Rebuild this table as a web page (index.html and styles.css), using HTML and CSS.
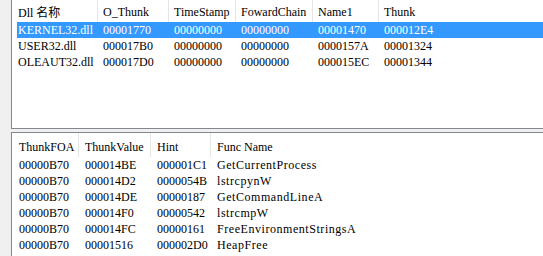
FILE: index.html
```html
<!DOCTYPE html>
<html>
<head>
<meta charset="utf-8">
<link rel="stylesheet" href="styles.css">
</head>
<body>
<div class="frame">
  <section class="panel top">
    <div class="hdr cols-top">
      <div class="hc first">Dll <span class="cjk">名称</span></div>
      <div class="hc">O_Thunk</div>
      <div class="hc">TimeStamp</div>
      <div class="hc">FowardChain</div>
      <div class="hc">Name1</div>
      <div class="hc">Thunk</div>
    </div>
    <div class="row rows-top sel">
      <div>KERNEL32.dll</div><div>00001770</div><div>00000000</div><div>00000000</div><div>00001470</div><div>000012E4</div>
    </div>
    <div class="row rows-top">
      <div>USER32.dll</div><div>000017B0</div><div>00000000</div><div>00000000</div><div>0000157A</div><div>00001324</div>
    </div>
    <div class="row rows-top">
      <div>OLEAUT32.dll</div><div>000017D0</div><div>00000000</div><div>00000000</div><div>000015EC</div><div>00001344</div>
    </div>
  </section>
  <section class="panel bottom">
    <div class="hdr cols-bot">
      <div class="hc first">ThunkFOA</div>
      <div class="hc">ThunkValue</div>
      <div class="hc">Hint</div>
      <div class="hc">Func Name</div>
    </div>
    <div class="row rows-bot"><div>00000B70</div><div>000014BE</div><div>000001C1</div><div class="fn">GetCurrentProcess</div></div>
    <div class="row rows-bot"><div>00000B70</div><div>000014D2</div><div>0000054B</div><div class="fn">lstrcpynW</div></div>
    <div class="row rows-bot"><div>00000B70</div><div>000014DE</div><div>00000187</div><div class="fn">GetCommandLineA</div></div>
    <div class="row rows-bot"><div>00000B70</div><div>000014F0</div><div>00000542</div><div class="fn">lstrcmpW</div></div>
    <div class="row rows-bot"><div>00000B70</div><div>000014FC</div><div>00000161</div><div class="fn">FreeEnvironmentStringsA</div></div>
    <div class="row rows-bot"><div>00000B70</div><div>00001516</div><div>000002D0</div><div class="fn">HeapFree</div></div>
  </section>
</div>
</body>
</html>
```
FILE: styles.css
```css
html, body {
  margin: 0;
  padding: 0;
  background: #f0f0f0;
  overflow: hidden;
  width: 543px;
  height: 256px;
}
body {
  font-family: "Liberation Serif", "Times New Roman", serif;
  font-size: 12px;
  color: #000;
}
.cjk {
  font-family: "Noto Sans CJK SC", sans-serif;
  font-size: 12px;
}
.frame {
  box-sizing: border-box;
  height: 256px;
  width: 543px;
  padding-left: 11px;
  display: flex;
  flex-direction: column;
  gap: 3px;
  overflow: hidden;
}
.panel {
  background: #fff;
  border-left: 1px solid #828790;
  overflow: hidden;
}
.top {
  flex: 0 0 128px;
  border-bottom: 1px solid #828790;
}
.bottom {
  flex: 1 1 auto;
  border-top: 1px solid #828790;
}
.hdr {
  display: grid;
}
.top .hdr { height: 22px; }
.bottom .hdr { height: 24px; }
.hc {
  border-left: 1px solid #e5e5e5;
  line-height: 16px;
  white-space: nowrap;
}
.hc.first { border-left: none; }
.top .hc { padding-top: 4px; padding-left: 5px; }
.top .hc.first { padding-left: 6px; }
.bottom .hc { padding-top: 6px; padding-left: 6px; }
.bottom .hc.first { padding-left: 7px; }
.cols-top { grid-template-columns: 85px 71px 67px 77px 66px 1fr; }
.row {
  display: grid;
  height: 16px;
  line-height: 16px;
  white-space: nowrap;
}
.rows-top {
  grid-template-columns: 80px 71px 67px 77px 66px 1fr;
  margin-left: 5px;
}
.rows-top > div { padding-left: 6px; }
.rows-top > div:first-child { padding-left: 1px; }
.sel {
  background: #3399ff;
  color: #fff;
}
.cols-bot { grid-template-columns: 66px 72px 60px 1fr; }
.rows-bot { grid-template-columns: 66px 72px 60px 1fr; }
.rows-bot > div { padding-left: 7px; }
.rows-bot > .fn { letter-spacing: 0.55px; }
```
